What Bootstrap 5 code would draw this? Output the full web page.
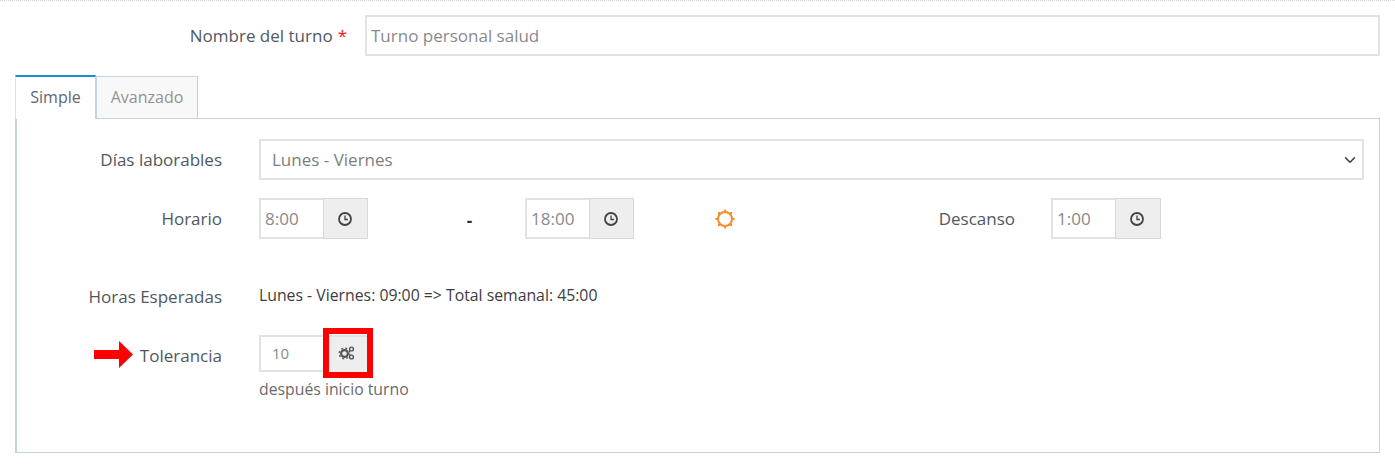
<!DOCTYPE html>
<html lang="es">
<head>
<meta charset="utf-8">
<title>Turno</title>
<link href="https://cdn.jsdelivr.net/npm/bootstrap@5.3.0/dist/css/bootstrap.min.css" rel="stylesheet">
<style>
html,body{height:466px;overflow:hidden}
body{background:#fff;font-family:"Open Sans",sans-serif;font-size:17px;color:#50585f;border-top:1px dotted #d5d5d5}
.page-wrap{padding:14px 15px 0}
.name-row{display:flex;align-items:center;margin-bottom:19px}
.name-label{width:332px;padding-right:0;margin:0;color:#50585f;white-space:nowrap;display:flex;justify-content:flex-end;gap:5px}
.req{color:#f0141e}
.name-field{margin-left:18px;flex:1}
.fld{height:41px;border:2px solid #e2e2e2;border-radius:0;font-size:17px;color:#8a8a8a;padding:0 4px;box-shadow:none;background-color:#fff}
.fld::placeholder{color:#8a8a8a;opacity:1}
.tab-strip{border-bottom:0;height:43px;align-items:flex-end;flex-wrap:nowrap}
.tab-strip .nav-link{border-radius:0;font-size:16px;margin:0;color:#939393;background:#f8f8f8;border:1px solid #c3d3e0;border-bottom:0;height:42px;width:102px;padding:0 0 2px;display:flex;align-items:center;justify-content:center}
.tab-strip .nav-link.active{color:#5f6770;background:#fff;width:81px;border-top:2px solid #1593d0;border-right:1px solid #c3d3e0;position:relative;z-index:2;margin-bottom:-1px;height:44px}
.pane-box{border:1px solid #c3d3e0;border-left-width:2px;height:335px;padding:20px 15px 0 0;margin-top:0}
.f-row{display:flex;align-items:center}
.f-label{width:205px;flex:none;margin:0 37px 0 0;text-align:right;color:#50585f;white-space:nowrap}
.week-select{flex:1;height:41px;border:2px solid #e2e2e2;border-radius:0;font-size:17px;color:#7d7d7d;padding:0 36px 0 11px;background-position:right 4px center;box-shadow:none}
.time-row{margin-top:18px}
.tgroup{display:flex;height:41px;flex:none;width:109px}
.tgroup-wide{width:110px}
.tinput{width:64px;flex:none;border:2px solid #e2e2e2;border-right:0;display:flex;align-items:center;padding-left:4px;color:#8a8a8a;font-size:17px}
.taddon{flex:1;background:#eee;border:1px solid #d8d8d8;display:flex;align-items:center;justify-content:center;color:#3a3a3a;padding:0}
.taddon svg{margin-right:2px}
.dash{width:157px;text-align:center;font-weight:700;color:#333;flex:none;padding-top:4px;padding-left:46px}
.sun{width:91px;flex:none;margin-left:81px;display:flex}
.rest-label{width:223px;flex:none;text-align:right;margin:0 36px 0 -14px;color:#50585f}
.hours-row{margin-top:45px;height:26px}
.hours-val{font-size:15.8px;color:#3d3d3d;margin-top:-3px}
.tol-row{margin-top:25px;align-items:flex-start}
.tol-label{padding-top:6px;display:flex;justify-content:flex-end;align-items:center;gap:7px}
.tol-label svg{margin-bottom:3px}
.tol-group{display:flex;height:37px;width:108px;position:relative}
.tol-input{width:64px;flex:none;border:2px solid #e2e2e2;border-right:0;display:flex;align-items:center;padding-left:11px;color:#8a8a8a;font-size:15px}
.tol-btn{flex:1;background:#eee;border:0;border-top:2px solid #e2e2e2;padding:0;display:flex;align-items:center;justify-content:center}
.tol-btn svg{margin:0 0 3px 4px}
.red-box{position:absolute;left:64px;top:-7px;width:50px;height:50px;border:6px solid #f00;pointer-events:none}
.tol-help{font-size:15.8px;color:#6b6b6b;margin-top:6px}
</style>
</head>
<body>
<div class="page-wrap">
  <form>
    <div class="name-row">
      <label class="name-label" for="nm"><span>Nombre del turno</span><span class="req">*</span></label>
      <div class="name-field"><input id="nm" class="form-control fld" type="text" placeholder="Turno personal salud"></div>
    </div>
    <ul class="nav nav-tabs tab-strip">
      <li class="nav-item"><a class="nav-link active" href="#">Simple</a></li>
      <li class="nav-item"><a class="nav-link" href="#">Avanzado</a></li>
    </ul>
    <div class="pane-box">
      <div class="f-row">
        <label class="f-label">Días laborables</label>
        <select class="form-select week-select"><option>Lunes - Viernes</option></select>
      </div>
      <div class="f-row time-row">
        <label class="f-label">Horario</label>
        <div class="tgroup"><div class="tinput">8:00</div><div class="taddon"><svg width="16" height="16" viewBox="0 0 16 16" fill="none" stroke="#444" stroke-width="1.8"><circle cx="8" cy="8" r="6"/><path d="M8 4.5V8.5H11" stroke-width="1.3"/></svg></div></div>
        <div class="dash">-</div>
        <div class="tgroup"><div class="tinput">18:00</div><div class="taddon"><svg width="16" height="16" viewBox="0 0 16 16" fill="none" stroke="#444" stroke-width="1.8"><circle cx="8" cy="8" r="6"/><path d="M8 4.5V8.5H11" stroke-width="1.3"/></svg></div></div>
        <div class="sun"><svg width="20" height="20" viewBox="0 0 20 20" fill="none"><circle cx="10" cy="10" r="7" stroke="#f98a2c" stroke-width="2"/><g fill="#f98a2c"><rect x="9" y="0.5" width="2" height="2.5"/><rect x="9" y="17" width="2" height="2.5"/><rect x="0.5" y="9" width="2.5" height="2"/><rect x="17" y="9" width="2.5" height="2"/><rect x="3" y="3" width="2.2" height="2.2"/><rect x="14.8" y="3" width="2.2" height="2.2"/><rect x="3" y="14.8" width="2.2" height="2.2"/><rect x="14.8" y="14.8" width="2.2" height="2.2"/></g></svg></div>
        <label class="rest-label">Descanso</label>
        <div class="tgroup tgroup-wide"><div class="tinput">1:00</div><div class="taddon"><svg width="16" height="16" viewBox="0 0 16 16" fill="none" stroke="#444" stroke-width="1.8"><circle cx="8" cy="8" r="6"/><path d="M8 4.5V8.5H11" stroke-width="1.3"/></svg></div></div>
      </div>
      <div class="f-row hours-row">
        <label class="f-label">Horas Esperadas</label>
        <div class="hours-val">Lunes - Viernes: 09:00 =&gt; Total semanal: 45:00</div>
      </div>
      <div class="f-row tol-row">
        <label class="f-label tol-label"><svg width="39" height="27" viewBox="0 0 39 27"><path d="M0 9H25V0L39 13.5L25 27V18H0Z" fill="#f00"/></svg><span>Tolerancia</span></label>
        <div>
          <div class="tol-group">
            <div class="tol-input">10</div>
            <button type="button" class="tol-btn" aria-label="Ajustes"><svg width="18" height="16" viewBox="0 0 18 16" fill="none" stroke="#555"><circle cx="6.5" cy="8.5" r="3.4" stroke-width="2.2"/><circle cx="6.5" cy="8.5" r="5.3" stroke-width="1.3" stroke-dasharray="2 2.2"/><circle cx="13.5" cy="4" r="1.9" stroke-width="1.4"/><circle cx="13.5" cy="12" r="1.9" stroke-width="1.4"/></svg></button>
            <div class="red-box"></div>
          </div>
          <div class="tol-help">después inicio turno</div>
        </div>
      </div>
    </div>
  </form>
</div>
</body>
</html>
